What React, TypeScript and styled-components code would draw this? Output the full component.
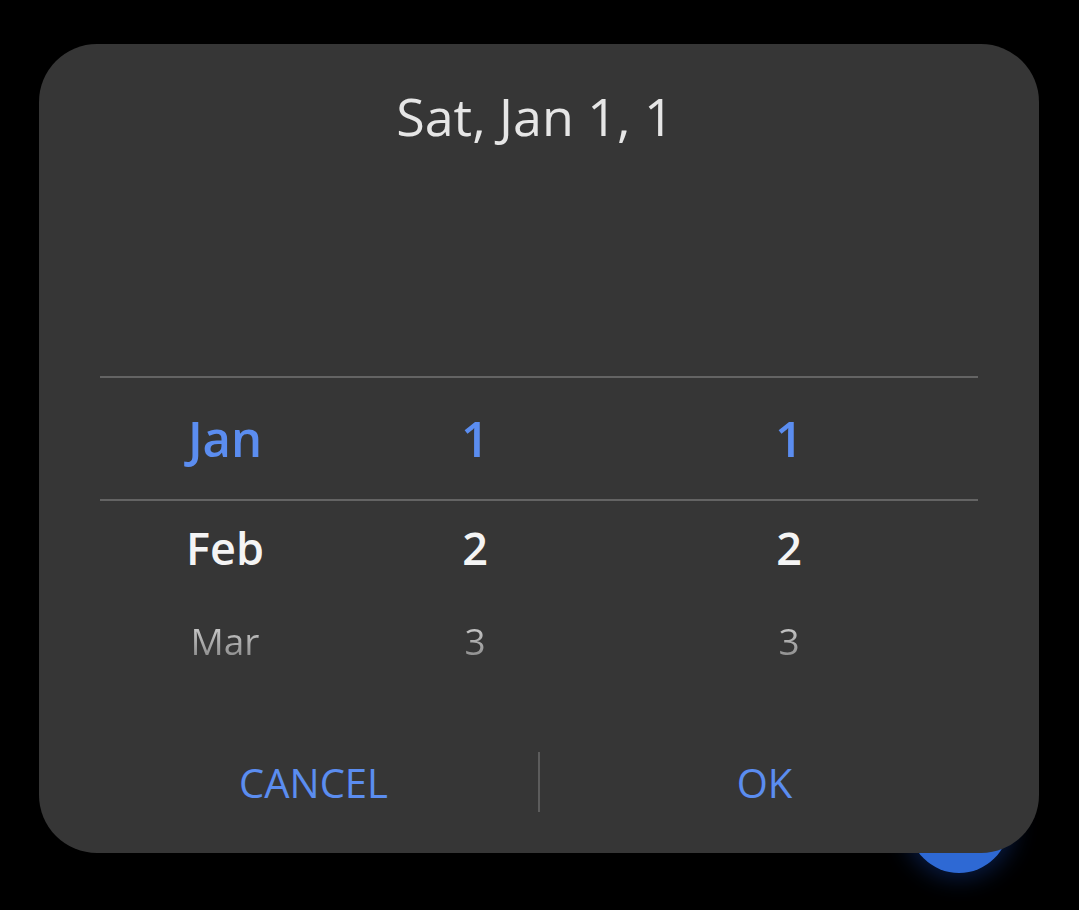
import styled, { createGlobalStyle, css } from 'styled-components';

const GlobalStyle = createGlobalStyle`
  html, body {
    margin: 0;
    padding: 0;
    background: #000;
  }
  body {
    font-family: "Open Sans", "Noto Sans", sans-serif;
  }
`;

const Screen = styled.div`
  position: relative;
  width: 1079px;
  height: 910px;
  padding: 44px 40px 0 39px;
  box-sizing: border-box;
  background: #000;
  overflow: hidden;
`;

const Fab = styled.div`
  position: absolute;
  left: 909px;
  top: 773px;
  width: 100px;
  height: 100px;
  border-radius: 50%;
  background: #2e69d4;
  box-shadow: 0 0 24px 4px rgba(30, 90, 220, 0.35);
`;

const Dialog = styled.div`
  position: relative;
  width: 1000px;
  height: 809px;
  box-sizing: border-box;
  background: #363636;
  border-radius: 58px;
  padding: 46px 0 41px;
  display: flex;
  flex-direction: column;
`;

const Title = styled.h1`
  margin: 0;
  font-size: 52px;
  line-height: 52px;
  font-weight: 500;
  color: #e6e6e6;
  text-align: center;
  padding-right: 8px;
`;

const Picker = styled.div`
  margin: 234px 61px 0;
  display: flex;
  flex-direction: column;
`;

type RowKind = 'selected' | 'next' | 'far';

const Row = styled.div<{ $kind: RowKind }>`
  display: grid;
  grid-template-columns: 250px 250px 1fr;
  align-items: center;
  box-sizing: border-box;
  ${({ $kind }) =>
    $kind === 'selected'
      ? css`
          height: 125px;
          border-top: 2px solid #646464;
          border-bottom: 2px solid #646464;
        `
      : $kind === 'next'
      ? css`
          height: 92px;
        `
      : css`
          height: 94px;
        `}
`;

const Cell = styled.span<{ $kind: RowKind }>`
  text-align: center;
  line-height: 1;
  ${({ $kind }) =>
    $kind === 'selected'
      ? css`
          font-size: 49px;
          font-weight: 600;
          color: #5b8df0;
        `
      : $kind === 'next'
      ? css`
          font-size: 45px;
          font-weight: 600;
          color: #f4f4f4;
        `
      : css`
          font-size: 37px;
          font-weight: 500;
          background: linear-gradient(#d2d2d2, #8a8a8a);
          -webkit-background-clip: text;
          background-clip: text;
          color: transparent;
        `}
`;

const Actions = styled.div`
  margin-top: auto;
  height: 60px;
  padding: 0 50px;
  display: flex;
  align-items: center;
`;

const ActionButton = styled.button`
  flex: 1;
  height: 100%;
  background: none;
  border: none;
  padding: 0;
  font-family: inherit;
  font-size: 40px;
  font-weight: 500;
  color: #5b8df0;
  cursor: pointer;
`;

const Separator = styled.div`
  width: 2px;
  height: 60px;
  background: #5c5c5c;
`;

const rows: { kind: RowKind; values: [string, string, string] }[] = [
  { kind: 'selected', values: ['Jan', '1', '1'] },
  { kind: 'next', values: ['Feb', '2', '2'] },
  { kind: 'far', values: ['Mar', '3', '3'] },
];

const App = () => {
  return (
    <>
      <GlobalStyle />
      <Screen>
        <Fab />
        <Dialog>
          <Title>Sat, Jan 1, 1</Title>
          <Picker>
            {rows.map((row) => (
              <Row key={row.values[0]} $kind={row.kind}>
                {row.values.map((v, i) => (
                  <Cell key={i} $kind={row.kind}>{v}</Cell>
                ))}
              </Row>
            ))}
          </Picker>
          <Actions>
            <ActionButton>CANCEL</ActionButton>
            <Separator />
            <ActionButton>OK</ActionButton>
          </Actions>
        </Dialog>
      </Screen>
    </>
  );
};

export default App;
